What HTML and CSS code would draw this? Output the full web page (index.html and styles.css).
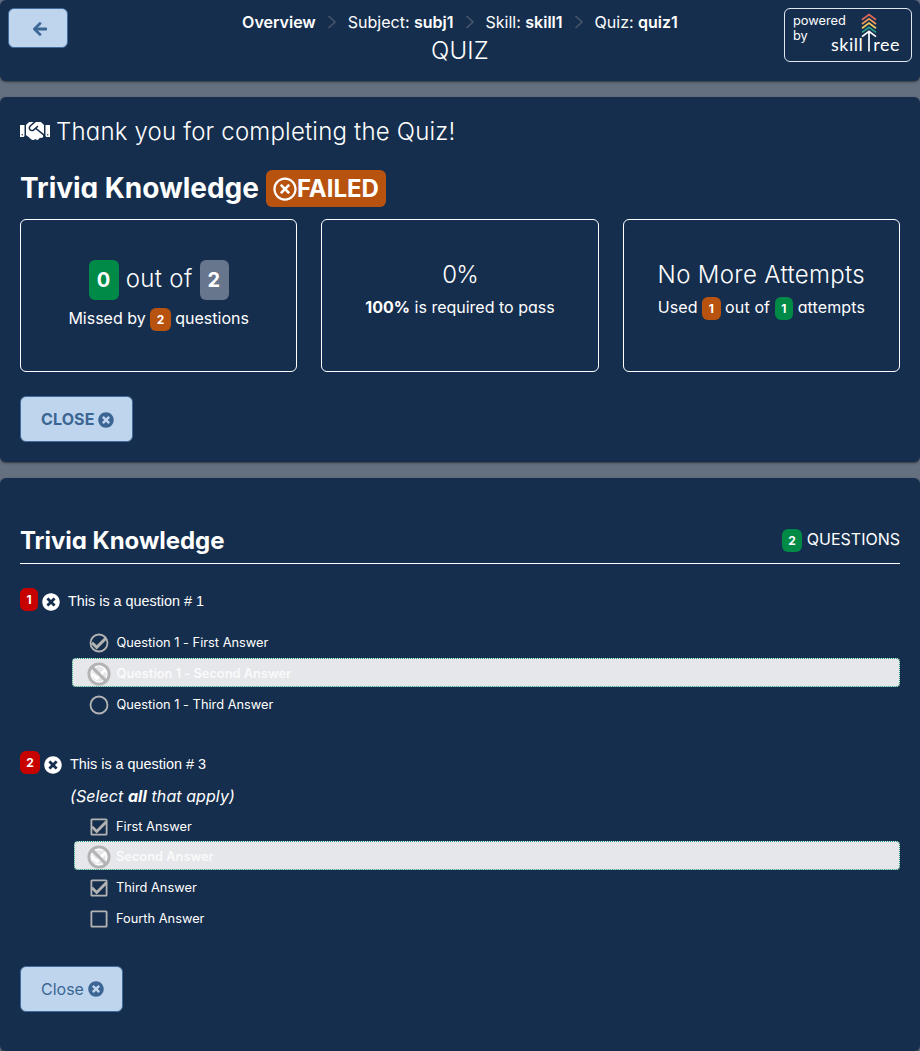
FILE: index.html
```html
<!DOCTYPE html>
<html lang="en">
<head>
<meta charset="utf-8">
<title>Quiz</title>
<link rel="stylesheet" href="styles.css">
</head>
<body>
<svg class="defs" aria-hidden="true">
  <symbol id="times-circle" viewBox="0 0 512 512"><path d="M256 8C119 8 8 119 8 256s111 248 248 248 248-111 248-248S393 8 256 8zm121.6 313.1c4.7 4.7 4.7 12.3 0 17L338 377.6c-4.7 4.7-12.3 4.7-17 0L256 312l-65.1 65.6c-4.7 4.7-12.3 4.7-17 0L134.4 338c-4.7-4.7-4.7-12.3 0-17l65.6-65-65.6-65.1c-4.7-4.7-4.7-12.3 0-17l39.6-39.6c4.7-4.7 12.3-4.7 17 0l65 65.7 65.1-65.6c4.7-4.7 12.3-4.7 17 0l39.6 39.6c4.7 4.7 4.7 12.3 0 17L312 256l65.6 65.1z"/></symbol>
  <symbol id="chevron" viewBox="0 0 10 14"><path d="M1.5 1 8 7l-6.5 6" fill="none" stroke="currentColor" stroke-width="1.6"/></symbol>
  <symbol id="radio" viewBox="0 0 20 20"><circle cx="10" cy="10" r="8.5" fill="none" stroke="currentColor" stroke-width="1.8"/></symbol>
  <symbol id="radio-check" viewBox="0 0 20 20"><circle cx="10" cy="10" r="8.5" fill="none" stroke="currentColor" stroke-width="1.8"/><path d="m3 9.7 4.7 4.7 9.4-9.4" fill="none" stroke="currentColor" stroke-width="3"/></symbol>
  <symbol id="box" viewBox="0 0 20 20"><rect x="2.4" y="2.4" width="15.2" height="15.2" rx=".6" fill="none" stroke="currentColor" stroke-width="1.8"/></symbol>
  <symbol id="box-check" viewBox="0 0 20 20"><rect x="2.4" y="2.4" width="15.2" height="15.2" rx=".6" fill="none" stroke="currentColor" stroke-width="1.8"/><path d="m3 9.7 4.7 4.7 9.6-9.6" fill="none" stroke="currentColor" stroke-width="2.8"/></symbol>
  <symbol id="ban" viewBox="0 0 24 24"><path d="M4.4 4.4 19.6 19.6" stroke="currentColor" stroke-width="3"/><circle cx="12" cy="12" r="10.1" fill="none" stroke="currentColor" stroke-width="2.9"/></symbol>
</svg>

<header class="panel header">
  <button class="btn btn-back" aria-label="Back"><svg class="arrow" viewBox="0 0 448 512"><path d="M257.5 445.1l-22.2 22.2c-9.4 9.4-24.6 9.4-33.9 0L7 273c-9.4-9.4-9.4-24.6 0-33.9L201.4 44.7c9.4-9.4 24.6-9.4 33.9 0l22.2 22.2c9.5 9.5 9.3 25-.4 34.3L136.6 216H424c13.3 0 24 10.7 24 24v32c0 13.3-10.7 24-24 24H136.6l120.5 114.8c9.8 9.3 10 24.8.4 34.3z"/></svg></button>
  <div class="heading">
    <nav class="crumbs">
      <b>Overview</b><svg class="sep"><use href="#chevron"/></svg>
      <span>Subject: <b>subj1</b></span><svg class="sep"><use href="#chevron"/></svg>
      <span>Skill: <b>skill1</b></span><svg class="sep"><use href="#chevron"/></svg>
      <span>Quiz: <b>quiz1</b></span>
    </nav>
    <h1 class="page-title">QUIZ</h1>
  </div>
  <div class="powered">
    <span class="powered-text">powered<br>by</span>
    <span class="logo"><span>skill</span><svg class="tree" viewBox="0 0 16 40"><g fill="none" stroke-width="1.7"><path stroke="#e0695a" d="M1 6.8 8 1.6l7 5.2"/><path stroke="#ee9a58" d="M1 11 8 5.8l7 5.2"/><path stroke="#f0c85e" d="M1 15.2 8 10l7 5.2"/><path stroke="#2aa08c" d="M1 19.4 8 14.2l7 5.2"/><path stroke="#fff" d="M1 23.6 8 18.4l7 5.2M8 19v19.6"/></g></svg><span>ree</span></span>
  </div>
</header>

<section class="panel summary">
  <h2 class="thanks"><svg class="handshake" viewBox="0 0 640 512"><path d="M434.7 64h-85.9c-8 0-15.7 3-21.6 8.4l-98.3 90c-.1.1-.2.3-.3.4-16.6 15.6-16.3 40.5-2.1 56 12.7 13.9 39.4 17.6 56.1 2.7.1-.1.3-.1.4-.2l79.9-73.2c6.5-5.9 16.7-5.5 22.6 1 6 6.5 5.5 16.6-1 22.6l-26.1 23.9L504 313.8c2.9 2.4 5.5 5 7.9 7.7V128l-54.6-54.6c-5.9-6-14.1-9.4-22.6-9.4zM544 128.2v223.9c0 17.7 14.3 32 32 32h64V128.2h-96zm48 223.9c-8.8 0-16-7.2-16-16s7.2-16 16-16 16 7.2 16 16-7.2 16-16 16zM0 384h64c17.7 0 32-14.3 32-32V128.2H0V384zm48-63.9c8.8 0 16 7.2 16 16s-7.2 16-16 16-16-7.2-16-16c0-8.9 7.2-16 16-16zm435.9 18.6L334.6 217.5l-30 27.5c-29.7 27.1-75.2 24.5-101.7-4.4-26.9-29.4-24.8-74.9 4.4-101.7L289.1 64h-83.8c-8.5 0-16.6 3.4-22.6 9.4L128 128v223.9h18.3l90.5 81.9c27.4 22.3 67.7 18.1 90-9.3l.2-.2 17.9 15.5c15.9 13 39.4 10.5 52.3-5.4l31.4-38.6 5.4 4.4c13.7 11.1 33.9 9.1 45-4.7l9.5-11.7c11.2-13.8 9.1-33.9-4.6-45.1z"/></svg>Thank you for completing the Quiz!</h2>
  <div class="result"><span class="quiz-name">Trivia Knowledge</span><span class="failed"><svg viewBox="0 0 512 512"><path d="M256 8C119 8 8 119 8 256s111 248 248 248 248-111 248-248S393 8 256 8zm0 448c-110.5 0-200-89.5-200-200S145.5 56 256 56s200 89.5 200 200-89.5 200-200 200zm101.8-262.2L295.6 256l62.2 62.2c4.7 4.7 4.7 12.3 0 17l-22.6 22.6c-4.7 4.7-12.3 4.7-17 0L256 295.6l-62.2 62.2c-4.7 4.7-12.3 4.7-17 0l-22.6-22.6c-4.7-4.7-4.7-12.3 0-17l62.2-62.2-62.2-62.2c-4.7-4.7-4.7-12.3 0-17l22.6-22.6c4.7-4.7 12.3-4.7 17 0l62.2 62.2 62.2-62.2c4.7-4.7 12.3-4.7 17 0l22.6 22.6c4.7 4.7 4.7 12.3 0 17z"/></svg>FAILED</span></div>
  <div class="cards">
    <div class="card">
      <div class="big score"><span class="badge xl green">0</span><span class="outof">out of</span><span class="badge xl gray">2</span></div>
      <div class="small">Missed by <span class="badge orange">2</span> questions</div>
    </div>
    <div class="card">
      <div class="big percent">0%</div>
      <div class="small"><b>100%</b> is required to pass</div>
    </div>
    <div class="card">
      <div class="big">No More Attempts</div>
      <div class="small attempts">Used <span class="badge orange">1</span> out of <span class="badge green">1</span> attempts</div>
    </div>
  </div>
  <button class="btn btn-close strong">CLOSE<svg><use href="#times-circle"/></svg></button>
</section>

<section class="panel review">
  <div class="review-head"><h2 class="review-title">Trivia Knowledge</h2><div class="count"><span class="badge green">2</span> QUESTIONS</div></div>

  <div class="question first">
    <div class="marks"><span class="badge red">1</span><span class="wrong"><svg><use href="#times-circle"/></svg></span></div>
    <div class="body">
      <p class="prompt">This is a question # 1</p>
      <div class="answers radios">
        <div class="answer"><span class="mark"><svg><use href="#radio-check"/></svg></span>Question 1 - First Answer</div>
        <div class="answer missed"><span class="mark"><svg class="under"><use href="#radio-check"/></svg><svg class="ban"><use href="#ban"/></svg></span>Question 1 - Second Answer</div>
        <div class="answer"><span class="mark"><svg><use href="#radio"/></svg></span>Question 1 - Third Answer</div>
      </div>
    </div>
  </div>

  <div class="question second">
    <div class="marks"><span class="badge red">2</span><span class="wrong"><svg><use href="#times-circle"/></svg></span></div>
    <div class="body">
      <p class="prompt">This is a question # 3</p>
      <p class="hint">(Select <b>all</b> that apply)</p>
      <div class="answers boxes">
        <div class="answer"><span class="mark"><svg><use href="#box-check"/></svg></span>First Answer</div>
        <div class="answer missed"><span class="mark"><svg class="under"><use href="#box-check"/></svg><svg class="ban"><use href="#ban"/></svg></span>Second Answer</div>
        <div class="answer"><span class="mark"><svg><use href="#box-check"/></svg></span>Third Answer</div>
        <div class="answer"><span class="mark"><svg><use href="#box"/></svg></span>Fourth Answer</div>
      </div>
    </div>
  </div>

  <button class="btn btn-close">Close<svg><use href="#times-circle"/></svg></button>
</section>
</body>
</html>
```
FILE: styles.css
```css
* { box-sizing: border-box; }
body {
  margin: 0;
  background: #646f7f;
  color: #fff;
  font: 400 16px/24px Inter, sans-serif;
  font-feature-settings: "cv02", "cv03", "cv04", "cv11";
}
h1, h2, p { margin: 0; font-weight: inherit; }
b { font-weight: 700; }
svg { display: block; fill: currentColor; flex: none; }
.defs { position: absolute; width: 0; height: 0; }

.panel {
  background: #162e4d;
  border-radius: 6px;
  margin-bottom: 16px;
  box-shadow: 0 1px 3px rgba(0,0,0,.3), 0 1px 1px rgba(0,0,0,.25);
}
.btn {
  display: flex;
  align-items: center;
  justify-content: center;
  background: #bfd5ee;
  border: 1px solid #3f6b9c;
  border-radius: 6px;
  color: #3b6694;
  font: inherit;
  letter-spacing: inherit;
  padding: 0;
}

.header {
  height: 81px;
  display: grid;
  grid-template-columns: 128px 1fr 128px;
  padding: 8px;
}
.btn-back { width: 60px; height: 40px; padding: 1px 0 0 4px; }
.arrow { width: 14px; height: 16px; stroke: currentColor; stroke-width: 14; }
.heading { text-align: center; padding-top: 2px; }
.crumbs { display: flex; justify-content: center; align-items: center; white-space: nowrap; }
.crumbs b { font-weight: 600; }
.sep { width: 10px; height: 14px; margin: 0 11px; color: #48566a; }
.page-title { font-size: 24px; line-height: 34px; font-weight: 300; letter-spacing: .2px; }
.powered {
  height: 54px;
  border: 1px solid #dfe7f0;
  border-radius: 6px;
  display: flex;
  padding: 4px 11px 0 8px;
  justify-content: space-between;
}
.powered-text { font-size: 12.8px; line-height: 15px; width: 37px; }
.logo { display: flex; align-items: flex-end; height: 40px; font: 400 18px/20px Lato, sans-serif; letter-spacing: .5px; }
.logo span { height: 19px; }
.tree { width: 16px; height: 40px; margin: 0 -4px 0 -2px; }

.summary { height: 365px; padding: 18px 20px 0; }
.thanks { display: flex; align-items: center; gap: 6px; font-size: 24px; line-height: 34px; font-weight: 300; letter-spacing: .19px; }
.handshake { width: 30px; height: 24px; margin-top: -2px; }
.result { display: flex; align-items: center; gap: 7px; margin-top: 21px; height: 37px; font-size: 28px; font-weight: 700; letter-spacing: -.03px; }
.quiz-name { margin-top: -2px; }
.failed {
  display: flex;
  align-items: center;
  height: 37px;
  padding: 0 7px;
  background: #b8520f;
  border-radius: 6px;
  font-size: 24px;
}
.failed svg { width: 24px; height: 24px; }
.cards { display: grid; grid-template-columns: repeat(3, 1fr); gap: 24px; margin-top: 12px; }
.card {
  height: 153px;
  border: 1px solid #fff;
  border-radius: 6px;
  padding-top: 40px;
  text-align: center;
}
.big { font-size: 24px; line-height: 30px; margin-bottom: 5px; font-weight: 300; letter-spacing: .35px; }
.percent { letter-spacing: -1px; }
.score { display: flex; justify-content: center; align-items: center; gap: 7px; height: 40px; margin-bottom: 6px; }
.outof { margin-top: -2px; }
.small { white-space: nowrap; }
.attempts { letter-spacing: .12px; }
.badge {
  display: inline-block;
  height: 23px;
  padding: 0 6.5px;
  border-radius: 6px;
  font-size: 12px;
  line-height: 23px;
  font-weight: 700;
  text-align: center;
}
.badge.xl { height: 40px; padding: 0 8px; font-size: 20px; line-height: 40px; }
.green { background: #008a48; }
.orange { background: #b8520f; }
.gray { background: #67768d; }
.red { background: #c70000; padding: 0; width: 19px; }
.second .red { width: 20px; }
.btn-close { height: 46px; gap: 4px; padding: 0 18px 0 20px; }
.btn-close svg { width: 16px; height: 16px; }
.summary .btn-close { margin-top: 24px; }
.strong { font-weight: 700; letter-spacing: .1px; }
.strong svg { margin-top: 1px; }

.review { height: 573px; padding: 45px 20px 0; margin-bottom: 0; }
.review-head { display: flex; justify-content: space-between; border-bottom: 1px solid #fff; height: 41px; }
.review-title { font-size: 24px; line-height: 36px; font-weight: 700; letter-spacing: -.05px; }
.count { line-height: 32px; }
.question { display: flex; }
.first { margin-top: 24px; height: 163px; }
.second { height: 215px; }
.marks { display: flex; gap: 4px; flex: none; width: 40px; }
.second .marks { width: 42px; }
.wrong { padding-top: 5px; }
.wrong svg { width: 18px; height: 18px; }
.body { flex: 1; }
.prompt { font: 14.4px/26px "Liberation Sans", Arial, sans-serif; letter-spacing: 0; padding-left: 8px; }
.hint { font-style: italic; padding-left: 8px; margin-top: 7px; letter-spacing: .08px; }
.answers { font-size: 12.8px; margin-left: 12px; letter-spacing: .01px; }
.radios { margin-top: 13px; }
.boxes { margin-top: 2px; }
.answer { display: flex; align-items: center; height: 31px; padding-left: 16.5px; }
.mark { display: grid; place-items: center; width: 20px; height: 20px; margin-right: 8px; color: #b3b3b3; }
.boxes .answer { padding: 2px 0 0 15px; }
.boxes .mark { margin-right: 7px; }
.mark > svg { grid-area: 1 / 1; width: 20px; height: 20px; }
.mark .under { color: #fff; }
.mark .ban { width: 24px; height: 24px; margin: -2px; }
.answer.missed {
  height: 29px;
  margin-bottom: 2px;
  padding: 2px 0 0 15.5px;
  background: #e5e7eb;
  border: 1px dotted #1c9c6d;
  border-radius: 4px;
  font-weight: 600;
  color: #fafafa;
}
.boxes .answer.missed { padding-left: 14px; margin-bottom: 1px; }
```
